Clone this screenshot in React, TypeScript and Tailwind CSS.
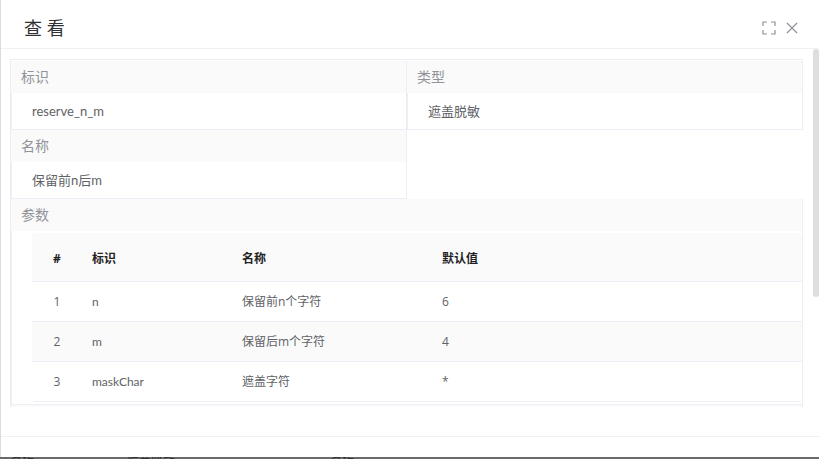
import type { ReactNode } from 'react'

type Param = {
  key: string
  name: string
  defaultValue: string
}

const params: Param[] = [
  { key: 'n', name: '保留前n个字符', defaultValue: '6' },
  { key: 'm', name: '保留后m个字符', defaultValue: '4' },
  { key: 'maskChar', name: '遮盖字符', defaultValue: '*' },
]

const FullscreenIcon = () => (
  <svg width="14" height="14" viewBox="0 0 14 14" fill="none" stroke="currentColor" strokeWidth="1.2" aria-hidden="true">
    <path d="M1 5V1h4M9 1h4v4M13 9v4H9M5 13H1V9" />
  </svg>
)

const CloseIcon = () => (
  <svg width="12" height="12" viewBox="0 0 12 12" fill="none" stroke="currentColor" strokeWidth="1.2" aria-hidden="true">
    <path d="M1 1l10 10M11 1L1 11" />
  </svg>
)

type ItemProps = {
  label: string
  children: ReactNode
}

const DescriptionItem = ({ label, children }: ItemProps) => (
  <div className="border-r border-b border-[#ebeef5]">
    <dt className="h-8 bg-[#fafafa] pl-[10px] text-sm leading-8 text-[#909399]">{label}</dt>
    <dd className="h-9 border-l border-[#ebeef5] pl-5 font-['Lato','Noto_Sans_CJK_SC',sans-serif] text-[13px] leading-9 text-[#606266]">
      {children}
    </dd>
  </div>
)

const thClass = 'h-[49px] border-b border-[#ebeef5] px-[10px] pt-1 font-bold'
const tdClass = 'h-10 border-b border-[#ebeef5] px-[10px]'

const ParamTable = () => (
  <div className="overflow-hidden rounded-sm">
    <table className="w-full table-fixed border-separate border-spacing-0 text-left text-xs text-[#606266]">
      <colgroup>
        <col className="w-[50px]" />
        <col className="w-[150px]" />
        <col className="w-[200px]" />
        <col />
      </colgroup>
      <thead className="bg-[#fafafa] text-[#222222]">
        <tr>
          <th className={`${thClass} text-center`}>#</th>
          <th className={thClass}>标识</th>
          <th className={thClass}>名称</th>
          <th className={thClass}>默认值</th>
        </tr>
      </thead>
      <tbody>
        {params.map((param, index) => (
          <tr key={param.key} className="even:bg-[#fafafa]">
            <td className={`${tdClass} text-center`}>{index + 1}</td>
            <td className={`${tdClass} font-['Lato',sans-serif]`}>{param.key}</td>
            <td className={tdClass}>{param.name}</td>
            <td className={tdClass}>{param.defaultValue}</td>
          </tr>
        ))}
      </tbody>
    </table>
  </div>
)

const App = () => {
  return (
    <div className="flex h-screen flex-col bg-[#6b696a] font-['Open_Sans','Noto_Sans_CJK_SC',sans-serif]">
      <section
        role="dialog"
        aria-labelledby="dialog-title"
        className="flex min-h-0 flex-1 flex-col border-l border-[#dcdcdc] bg-white"
      >
        <header className="flex h-[49px] shrink-0 items-center justify-between border-b border-[#f0f0f0] pt-2 pr-[21px] pl-[23px]">
          <h1 id="dialog-title" className="text-lg text-[#303133]">查 看</h1>
          <div className="flex items-center gap-[10px] text-[#909399]">
            <button type="button" aria-label="全屏">
              <FullscreenIcon />
            </button>
            <button type="button" aria-label="关闭">
              <CloseIcon />
            </button>
          </div>
        </header>

        <div className="flex min-h-0 flex-1">
          <div className="min-w-0 flex-1 overflow-hidden pt-[10px] pr-[10px] pl-[9px]">
            <dl className="grid grid-cols-2 border-t border-l border-[#ebeef5] pt-px">
              <DescriptionItem label="标识">reserve_n_m</DescriptionItem>
              <DescriptionItem label="类型">遮盖脱敏</DescriptionItem>
              <DescriptionItem label="名称">保留前n后m</DescriptionItem>
              <div className="col-span-2 border-r border-b border-[#ebeef5]">
                <dt className="h-8 bg-[#fafafa] pl-[10px] text-sm leading-8 text-[#909399]">参数</dt>
                <dd className="border-l border-[#ebeef5] py-[2px] pl-5">
                  <ParamTable />
                </dd>
              </div>
              <div className="col-span-2 h-[2px] border-r border-[#ebeef5] bg-[#fafafa]" />
            </dl>
          </div>
          {/* scroll thumb */}
          <div className="h-[64%] w-[6px] rounded-[3px] bg-[#dddee0]" />
        </div>

        <footer className="h-[21px] shrink-0 border-t border-[#f0f0f0]" />
      </section>

      {/* row of the page behind, under the mask */}
      <div aria-hidden="true" className="flex h-[2px] shrink-0 overflow-hidden pl-[10px] text-xs leading-3 text-[#2b2b2d]">
        <span className="w-[117px]">名称</span>
        <span className="w-[203px]">遮盖脱敏</span>
        <span>名称</span>
      </div>
    </div>
  )
}

export default App
